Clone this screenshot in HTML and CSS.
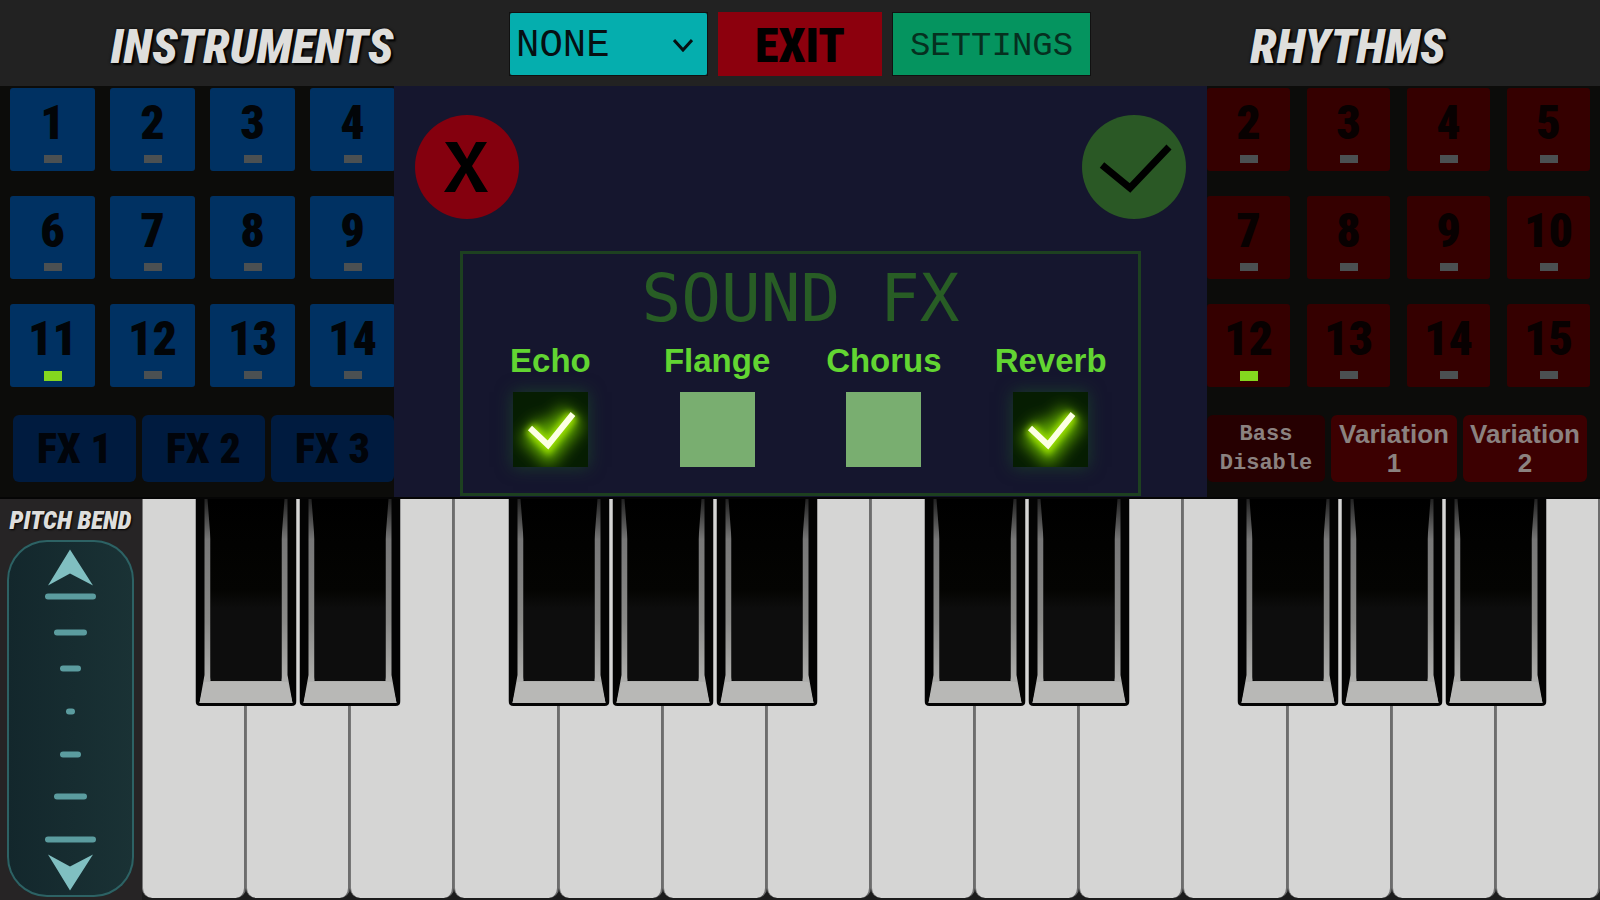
FILE: index.html
```html
<!DOCTYPE html>
<html lang="en">
<head>
    <meta charset="UTF-8">
    <meta name="viewport" content="width=device-width, initial-scale=1.0">
    <title>Piano - Sound FX</title>
    <link rel="stylesheet" href="styles.css">
</head>
<body>

<header class="topbar">
    <h1 class="title">INSTRUMENTS</h1>
    <div class="actions">
        <div class="select-wrap">
            <select class="select" aria-label="Mode">
                <option>NONE</option>
            </select>
            <svg class="chevron" viewBox="0 0 20 14"><path d="M1 2 L10 12 L19 2"/></svg>
        </div>
        <button type="button" class="exit">EXIT</button>
        <button type="button" class="settings">SETTINGS</button>
    </div>
    <h1 class="title">RHYTHMS</h1>
</header>

<main class="deck">
    <section class="bank instruments">
        <div class="pads">
            <button type="button" class="pad">1<span class="led"></span></button>
            <button type="button" class="pad">2<span class="led"></span></button>
            <button type="button" class="pad">3<span class="led"></span></button>
            <button type="button" class="pad">4<span class="led"></span></button>
            <button type="button" class="pad">6<span class="led"></span></button>
            <button type="button" class="pad">7<span class="led"></span></button>
            <button type="button" class="pad">8<span class="led"></span></button>
            <button type="button" class="pad">9<span class="led"></span></button>
            <button type="button" class="pad">11<span class="led on"></span></button>
            <button type="button" class="pad">12<span class="led"></span></button>
            <button type="button" class="pad">13<span class="led"></span></button>
            <button type="button" class="pad">14<span class="led"></span></button>
        </div>
        <div class="extras">
            <button type="button" class="extra">FX 1</button>
            <button type="button" class="extra">FX 2</button>
            <button type="button" class="extra">FX 3</button>
        </div>
    </section>

    <section class="dialog">
        <div class="dialog-buttons">
            <button type="button" class="round cancel" aria-label="Cancel">
                <svg viewBox="0 0 104 104"><path d="M30 27 H42 L52 44 L61 27 H72 L57 51 L73 77 H61 L51 58 L40 77 H29 L46 51 Z"/></svg>
            </button>
            <button type="button" class="round accept" aria-label="Accept">
                <svg viewBox="0 0 104 104"><path class="line" d="M20 50 L48 73 L87 32"/></svg>
            </button>
        </div>
        <div class="panel">
            <h2>SOUND FX</h2>
            <div class="effects">
                <label class="effect">Echo <input type="checkbox" checked></label>
                <label class="effect">Flange <input type="checkbox"></label>
                <label class="effect">Chorus <input type="checkbox"></label>
                <label class="effect">Reverb <input type="checkbox" checked></label>
            </div>
        </div>
    </section>

    <section class="bank rhythms">
        <div class="pads">
            <button type="button" class="pad">2<span class="led"></span></button>
            <button type="button" class="pad">3<span class="led"></span></button>
            <button type="button" class="pad">4<span class="led"></span></button>
            <button type="button" class="pad">5<span class="led"></span></button>
            <button type="button" class="pad">7<span class="led"></span></button>
            <button type="button" class="pad">8<span class="led"></span></button>
            <button type="button" class="pad">9<span class="led"></span></button>
            <button type="button" class="pad">10<span class="led"></span></button>
            <button type="button" class="pad">12<span class="led on"></span></button>
            <button type="button" class="pad">13<span class="led"></span></button>
            <button type="button" class="pad">14<span class="led"></span></button>
            <button type="button" class="pad">15<span class="led"></span></button>
        </div>
        <div class="extras">
            <button type="button" class="extra bass">Bass Disable</button>
            <button type="button" class="extra">Variation 1</button>
            <button type="button" class="extra">Variation 2</button>
        </div>
    </section>
</main>

<div class="bottom">
    <div class="bend">
        <label class="bend-title" for="bend">PITCH BEND</label>
        <div class="bend-track">
            <svg viewBox="0 0 127 356">
                <g class="arrows">
                    <path d="M63 9 L86 45 L63 33 L41 45 Z"/>
                    <path d="M63 350 L86 314 L63 326 L41 314 Z"/>
                </g>
                <g class="ticks">
                    <path d="M41 56 H86 M50 92 H77 M56 128 H71 M62 171 H65 M56 214 H71 M50 256 H77 M41 299 H86"/>
                </g>
            </svg>
            <input type="range" id="bend" min="-64" max="64" value="0">
        </div>
    </div>
    <div class="keyboard" id="keyboard"></div>
</div>

<template id="blackKey">
    <button type="button" class="black" aria-label="Black key">
        <svg viewBox="0 0 101 207">
            <defs>
                <linearGradient id="side" x1="0" y1="0" x2="0" y2="1">
                    <stop offset="0" stop-color="#222"/>
                    <stop offset="0.2" stop-color="#777"/>
                    <stop offset="0.6" stop-color="#8a8a88"/>
                    <stop offset="1" stop-color="#bdbdbb"/>
                </linearGradient>
                <linearGradient id="top" x1="0" y1="0" x2="0" y2="1">
                    <stop offset="0" stop-color="#000"/>
                    <stop offset="0.5" stop-color="#040402"/>
                    <stop offset="0.6" stop-color="#0d0d0d"/>
                </linearGradient>
            </defs>
            <path fill="#030303" d="M0 0 H101 V202 Q101 207 96 207 H5 Q0 207 0 202 Z"/>
            <path fill="url(#side)" d="M9 0 H15 V182 H86 V0 H92 V176 L97 204 H4 L9 176 Z"/>
            <path fill="#b8b8b6" d="M9 183 H92 L97 204 H4 Z"/>
            <path fill="url(#top)" d="M12 0 H89 L86 40 V178 Q86 182 82 182 H19 Q15 182 15 178 V40 Z"/>
        </svg>
    </button>
</template>

<script>
    const keyboard = document.getElementById('keyboard');
    const blackKey = document.getElementById('blackKey');
    const whiteKeys = 14;
    // white keys that have a black key over their right edge
    const withBlack = [1, 2, 4, 5, 6, 8, 9, 11, 12, 13];

    for (let i = 1; i <= whiteKeys; i++) {
        const slot = document.createElement('div');
        slot.className = 'slot';

        const white = document.createElement('button');
        white.type = 'button';
        white.className = 'white';
        white.setAttribute('aria-label', 'White key');
        slot.appendChild(white);

        if (withBlack.includes(i)) {
            slot.appendChild(blackKey.content.cloneNode(true));
        }
        keyboard.appendChild(slot);
    }
</script>

</body>
</html>
```

FILE: styles.css
```css
* {
    margin: 0;
    padding: 0;
    box-sizing: border-box;
}

body {
    font-family: "Liberation Sans", Arial, sans-serif;
    background-color: #222;
    color: #000;
    min-height: 100vh;
    display: flex;
    flex-direction: column;
    overflow: hidden;
}

button, select {
    border: none;
    cursor: pointer;
    font-family: inherit;
}

svg {
    display: block;
}

/* top bar */

.topbar {
    display: grid;
    grid-template-columns: 1fr 592px 1fr;
    align-items: center;
    height: 86px;
    padding-top: 2px;
    background-color: #222;
}

.title {
    font-family: "Roboto Condensed", "Liberation Sans Narrow", "Liberation Sans", sans-serif;
    font-size: 48px;
    font-style: italic;
    font-weight: 900;
    line-height: 50px;
    padding-top: 6px;
    text-align: center;
    color: #dededc;
    text-shadow: 0 0 3px #000, 2px 2px 2px #000;
}

.actions {
    display: flex;
    gap: 10px;
    height: 64px;
    padding: 0 5px;
}

.select-wrap {
    position: relative;
    flex: 6;
    border: 1px solid #111;
}

.select {
    appearance: none;
    width: 100%;
    height: 100%;
    padding: 4px 6px 0;
    border-radius: 2px;
    background-color: #05aeae;
    color: #061012;
    font-family: "Liberation Mono", monospace;
    font-size: 39px;
}

.chevron {
    position: absolute;
    right: 14px;
    top: 25px;
    width: 20px;
    fill: none;
    stroke: #061012;
    stroke-width: 3;
    pointer-events: none;
}

.exit {
    flex: 5;
    padding-top: 2px;
    background-color: #8c000d;
    font-family: "Roboto Condensed", "Liberation Sans Narrow", "Liberation Sans", sans-serif;
    font-size: 48px;
    font-weight: 900;
}

.settings {
    flex: 6;
    padding-top: 4px;
    border: 1px solid #111;
    background-color: #05945f;
    color: #06301f;
    font-family: "Liberation Mono", monospace;
    font-size: 34px;
}

/* deck */

.deck {
    display: grid;
    grid-template-columns: 394px 1fr 393px;
    border-bottom: 2px solid #050505;
    background-color: #0c0c0a;
}

.bank {
    overflow: hidden;
    padding-top: 2px;
}

.pads {
    display: grid;
    grid-auto-rows: 83px;
    row-gap: 25px;
}

.pad {
    display: flex;
    flex-direction: column;
    align-items: center;
    padding-top: 12px;
    border-radius: 3px;
    font-family: "Roboto Condensed", "Liberation Sans Narrow", "Liberation Sans", sans-serif;
    font-size: 48px;
    font-weight: 900;
    line-height: 46px;
}

.led {
    width: 18px;
    height: 8px;
    margin-top: 9px;
    background-color: #4b5052;
}

.led.on {
    height: 10px;
    background-color: #84d71f;
}

.extras {
    display: grid;
    grid-auto-rows: 67px;
    column-gap: 6px;
    margin-top: 28px;
}

.extra {
    border-radius: 6px;
}

.instruments .pads {
    grid-template-columns: repeat(4, 85px);
    column-gap: 15px;
    padding-left: 10px;
}

.instruments .pad {
    background-color: #003162;
    color: #020508;
}

.instruments .extras {
    grid-template-columns: repeat(3, 123px);
    padding-left: 13px;
}

.instruments .extra {
    background-color: #001b3f;
    color: #01040a;
    font-family: "Roboto Condensed", "Liberation Sans Narrow", "Liberation Sans", sans-serif;
    font-size: 42px;
    font-weight: 900;
}

.rhythms .pads {
    grid-template-columns: repeat(4, 83px);
    column-gap: 17px;
}

.rhythms .pad {
    background-color: #350000;
    color: #080101;
}

.rhythms .extras {
    grid-template-columns: 118px 126px 124px;
}

.rhythms .extra {
    background-color: #3c0001;
    color: #8b8280;
    font-size: 26px;
    font-weight: bold;
    line-height: 29px;
}

.rhythms .bass {
    background-color: #260001;
    font-family: "Liberation Mono", monospace;
    font-size: 22px;
}

/* sound fx dialog */

.dialog {
    display: flex;
    flex-direction: column;
    padding: 29px 0 1px;
    background-color: #15162e;
}

.dialog-buttons {
    display: flex;
    justify-content: space-between;
    padding: 0 21px;
}

.round {
    width: 104px;
    height: 104px;
    border-radius: 50%;
}

.cancel {
    background-color: #84000e;
}

.accept {
    background-color: #2a5825;
}

.round .line {
    fill: none;
    stroke: #000;
    stroke-width: 7;
}

.panel {
    flex: 1;
    margin: 32px 66px 0;
    padding: 6px 4px 26px;
    border: 3px solid #1d4020;
}

.panel h2 {
    font-family: "DejaVu Sans Mono", monospace;
    font-size: 66px;
    font-weight: normal;
    line-height: 78px;
    text-align: center;
    color: #285d25;
}

.effects {
    display: grid;
    grid-template-columns: repeat(4, 1fr);
    margin-top: 4px;
}

.effect {
    display: flex;
    flex-direction: column;
    align-items: center;
    gap: 12px;
    color: #62d532;
    font-size: 33px;
    font-weight: bold;
    line-height: 38px;
}

.effect input {
    appearance: none;
    width: 75px;
    height: 75px;
    background-color: #79ae70;
    cursor: pointer;
}

.effect input:checked {
    background: url("data:image/svg+xml,%3Csvg xmlns='http://www.w3.org/2000/svg' viewBox='0 0 75 75'%3E%3Cdefs%3E%3Cfilter id='g' x='-100%25' y='-100%25' width='300%25' height='300%25'%3E%3CfeGaussianBlur stdDeviation='8'/%3E%3C/filter%3E%3Cfilter id='s' x='-100%25' y='-100%25' width='300%25' height='300%25'%3E%3CfeGaussianBlur stdDeviation='3'/%3E%3C/filter%3E%3C/defs%3E%3Crect width='75' height='75' fill='%23061d02'/%3E%3Cg fill='none'%3E%3Cpath d='M17 36 L35 54 L60 23' stroke='%2361a800' stroke-width='28' filter='url(%23g)'/%3E%3Cpath d='M17 36 L35 54 L60 23' stroke='%239be000' stroke-width='12' filter='url(%23s)'/%3E%3Cpath d='M17 36 L35 53 L60 22' stroke='%23fdffe4' stroke-width='6'/%3E%3C/g%3E%3C/svg%3E");
    box-shadow: 0 0 16px #1b3f2a;
}

/* pitch bend and keys */

.bottom {
    flex: 1;
    display: flex;
    background-color: #262425;
}

.bend {
    width: 142px;
    display: flex;
    flex-direction: column;
    padding: 8px 8px 3px 7px;
}

.bend-title {
    font-family: "Roboto Condensed", "Liberation Sans Narrow", "Liberation Sans", sans-serif;
    font-size: 25px;
    font-style: italic;
    font-weight: 900;
    line-height: 28px;
    margin-bottom: 5px;
    text-align: center;
    white-space: nowrap;
    color: #dededc;
    text-shadow: 1px 1px 2px #000;
}

.bend-track {
    position: relative;
    flex: 1;
    border-radius: 40px;
    box-shadow: inset 0 0 0 2px #2d6264;
    background: linear-gradient(to right, #13272c, #1a3235);
}

.bend-track svg {
    width: 100%;
    height: 100%;
}

.bend-track input {
    position: absolute;
    inset: 0;
    width: 100%;
    height: 100%;
    writing-mode: vertical-lr;
    direction: rtl;
    opacity: 0;
    cursor: pointer;
}

.arrows {
    fill: #80bfc1;
}

.ticks {
    fill: none;
    stroke: #5b9c9f;
    stroke-width: 6;
    stroke-linecap: round;
}

.keyboard {
    flex: 1;
    display: flex;
    background-color: #1c1c1c;
}

.slot {
    position: relative;
    flex: 1;
    display: flex;
}

.white {
    flex: 1;
    margin-bottom: 2px;
    border-left: 1px solid #777;
    border-right: 2px solid #6d6d6d;
    border-radius: 0 0 10px 10px;
    background-color: #d5d5d4;
}

/* black keys sit over the joint of two white keys */
.black {
    position: absolute;
    top: 0;
    left: 100%;
    z-index: 1;
    width: 101px;
    transform: translateX(-50%);
    background: none;
}
```
